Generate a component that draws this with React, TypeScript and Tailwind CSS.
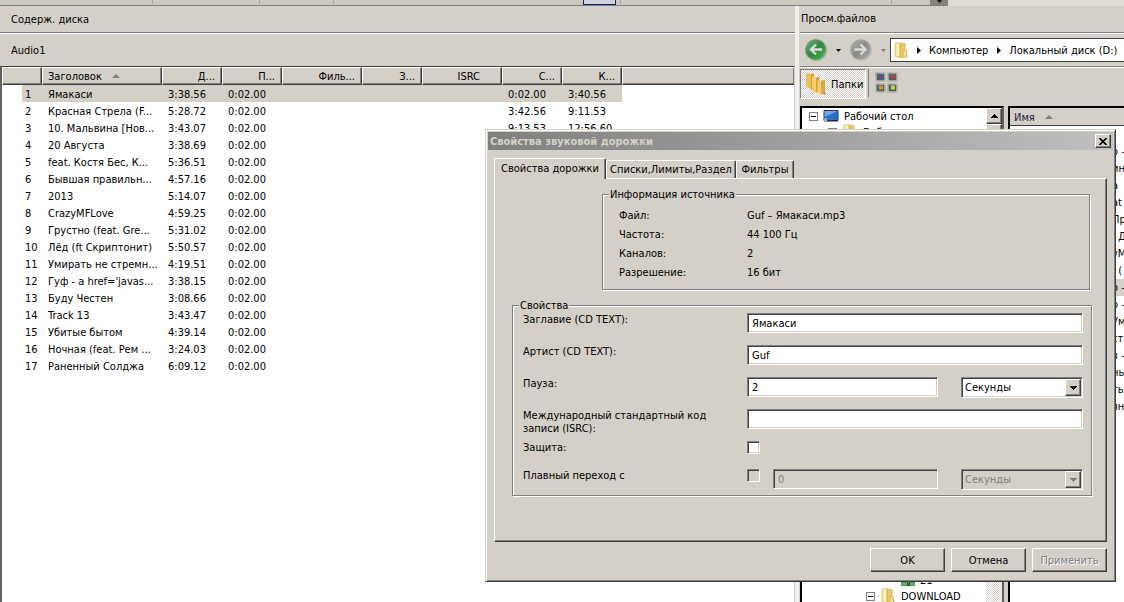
import { useState } from 'react'
import type { ReactNode } from 'react'

const raised =
  'border border-t-white border-l-white border-b-[#404040] border-r-[#404040] shadow-[inset_-1px_-1px_0_#808080]'
const sunken =
  'border border-t-[#808080] border-l-[#808080] border-b-white border-r-white shadow-[inset_1px_1px_0_#404040,inset_-1px_-1px_0_#d4d0c8]'
const dither = 'bg-[repeating-conic-gradient(#fff_0_25%,#d4d0c8_0_50%)] bg-[length:2px_2px]'

const tracks = [
  ['Ямакаси', '3:38.56', '0:02.00', '3:40.56'],
  ['Красная Стрела (F...', '5:28.72', '3:42.56', '9:11.53'],
  ['10. Мальвина [Нов...', '3:43.07', '9:13.53', '12:56.60'],
  ['20 Августа', '3:38.69'],
  ['feat. Костя Бес, К...', '5:36.51'],
  ['Бывшая правильн...', '4:57.16'],
  ['2013', '5:14.07'],
  ['CrazyMFLove', '4:59.25'],
  ['Грустно (feat. Gre...', '5:31.02'],
  ['Лёд (ft Скриптонит)', '5:50.57'],
  ['Умирать не стремн...', '4:19.51'],
  ["Гуф - a href='javas...", '3:38.15'],
  ['Буду Честен', '3:08.66'],
  ['Track 13', '3:43.47'],
  ['Убитые бытом', '4:39.14'],
  ['Ночная (feat. Рем ...', '3:24.03'],
  ['Раненный Солджа', '6:09.12'],
]

const columns = [
  { label: '', width: 'w-10', align: '' },
  { label: 'Заголовок', width: 'w-[120px]', align: 'pl-[5px]' },
  { label: 'Д...', width: 'w-[60px]', align: 'justify-end pr-[6px]' },
  { label: 'П...', width: 'w-[60px]', align: 'justify-end pr-[6px]' },
  { label: 'Филь...', width: 'w-20', align: 'justify-end pr-[6px]' },
  { label: 'З...', width: 'w-[60px]', align: 'justify-end pr-[6px]' },
  { label: 'ISRC', width: 'w-20', align: 'justify-end pr-[21px]' },
  { label: 'С...', width: 'w-[60px]', align: 'justify-end pr-[6px]' },
  { label: 'К...', width: 'w-[60px]', align: 'justify-end pr-[6px]' },
  { label: '', width: '', align: '' },
]

const files = ['', 'о –', 'ин', 'а', 'at', 'Пр', '\u00a0\u00a0Д', 'уМ', '\u00a0\u00a0(', 'о –', 'о –', 'Ум', 'ст', 'в –', 'нь', 'ть', 'чн']

function SortArrow() {
  return (
    <svg className="w-2 h-1 shrink-0" viewBox="0 0 8 4">
      <path d="M4 0 8 4H0z" fill="#808080" />
    </svg>
  )
}

function Caret({ className = 'text-black' }: { className?: string }) {
  return (
    <svg className={`w-[7px] h-1 shrink-0 ${className}`} viewBox="0 0 7 4" shapeRendering="crispEdges">
      <path d="M0 0h7L3.5 4z" fill="currentColor" />
    </svg>
  )
}

// small caret of the history drop-downs
function TinyCaret({ className = 'text-black' }: { className?: string }) {
  return (
    <svg className={`w-[5px] h-[3px] shrink-0 ${className}`} viewBox="0 0 5 3">
      <path d="M0 0h5L2.5 3z" fill="currentColor" />
    </svg>
  )
}

function Crumb() {
  return (
    <svg className="w-1 h-[7px] shrink-0" viewBox="0 0 4 7">
      <path d="M0 0 4 3.500 0 7z" fill="#000" />
    </svg>
  )
}

function NavArrow({ forward = false }: { forward?: boolean }) {
  const id = forward ? 'nav-forward' : 'nav-back'
  return (
    <svg className="w-6 h-6" viewBox="0 0 24 24">
      <defs>
        <linearGradient id={id} x1="0" y1="0" x2="1" y2="1">
          <stop offset="0" stopColor={forward ? '#b4b4b4' : '#7cb287'} />
          <stop offset=".5" stopColor={forward ? '#8b8b8b' : '#2f8a3c'} />
          <stop offset="1" stopColor={forward ? '#a9a9a9' : '#4cb04a'} />
        </linearGradient>
      </defs>
      <circle cx="12" cy="12" r="11" fill={forward ? '#bdbbb6' : '#9aa79a'} />
      <circle cx="11.5" cy="11.5" r="10" fill={`url(#${id})`} />
      <path
        d={forward ? 'M5.500 11.500h11M11.500 6.500l5 5-5 5' : 'M18 11.500H7M12 6.500l-5 5 5 5'}
        fill="none"
        stroke="#d9dcd9"
        strokeWidth="2.400"
      />
    </svg>
  )
}

function Folder() {
  return (
    <svg className="w-4 h-4 shrink-0" viewBox="0 0 16 16">
      <path d="M2 1 8 .5V14l-1 1.500-5-1z" fill="#f4e08b" stroke="#d9bb55" strokeWidth=".7" />
      <path d="M7.500 2 12 1.500V15l-5 .5z" fill="#eacb68" stroke="#caa545" strokeWidth=".7" />
      <path d="M3.500 1.500H6V14l-2.500-.5z" fill="#fbf2bd" />
      <path d="M10 8.500 13.500 8v7L10 15.500z" fill="#f5df8e" stroke="#cfae55" strokeWidth=".7" />
      <path d="M13 13h1.500v2H13z" fill="#7fb2c8" />
    </svg>
  )
}

function FoldersIcon() {
  return (
    <svg className="w-[22px] h-6 shrink-0" viewBox="0 0 22 24">
      <path d="M1 1 6 2v15l-5-2z" fill="#eebf55" />
      <path d="M6 2 9 1.500V17l-3 1z" fill="#d39c3c" />
      <path d="M7 4l4 1.500v15L7 18.500z" fill="#f3cd6a" />
      <path d="M11 5.500 14.500 5v14.500l-3.500 1z" fill="#d39c3c" />
      <path d="M12.500 8 16 9v13.500l-3.500-1.500z" fill="#f4cf70" />
      <path d="M16 8.500 20 8v13.500l-4 1z" fill="#dba848" />
      <path d="M18.500 20.500h2v2h-2z" fill="#6c93b8" />
    </svg>
  )
}

function ViewIcon() {
  const cells = [
    [0, 0, '#7a3fa0'],
    [12, 0, '#c43a3a'],
    [0, 11, '#e08a2a'],
    [12, 11, '#e2c424'],
  ] as const
  return (
    <svg className="w-6 h-6" viewBox="0 0 24 24">
      {cells.map(([x, y, color]) => (
        <g key={color} transform={`translate(${x} ${y})`}>
          <path d="M.5 1.500h10v9H.5z" fill="#e9e6df" stroke="#b1aea6" strokeWidth=".8" />
          <path d="M1.500 2.500h8v7h-8z" fill="#3f6a5c" />
          <path d="M1.500 2.500h3v2h-3z" fill="#58708c" />
          <path d="M4 3.500h4v4H4z" fill={color} />
        </g>
      ))}
    </svg>
  )
}

function Expander() {
  return (
    <svg className="w-[9px] h-[9px] shrink-0" viewBox="0 0 9 9" shapeRendering="crispEdges">
      <path d="M.5.5h8v8h-8z" fill="#fff" stroke="#808080" />
      <path d="M2 4.500h5" stroke="#000" />
    </svg>
  )
}

function DesktopIcon() {
  return (
    <svg className="w-4 h-4 shrink-0" viewBox="0 0 16 16">
      <path d="M1 2.500h14v10H1z" fill="#2f6fc6" stroke="#1a3a6b" />
      <path d="M1.500 3h13L1.500 9z" fill="#6fa8e6" />
      <path d="M1 12h14v1.500H1z" fill="#1d2c44" />
      <path d="M1 10h3v3H1z" fill="#57b7e8" />
      <path d="M2 12h2v1H2z" fill="#f3c332" />
    </svg>
  )
}

function ArchiveIcon() {
  return (
    <svg className="w-4 h-4 shrink-0" viewBox="0 0 16 16">
      <path d="M1 2h13v4H1z" fill="#a23a4a" />
      <path d="M1 6h14v4H1z" fill="#3b3a86" />
      <path d="M1 10h14v4H1z" fill="#3a9a4a" />
      <path d="M2 12h12" stroke="#7ee08a" />
      <path d="M7 2h3v12H7z" fill="#5b4a33" />
      <path d="M8 6h1v5H8z" fill="#c9bb92" />
    </svg>
  )
}

function TrackTable() {
  return (
    <table className="w-full table-fixed border-collapse">
      <thead>
        <tr>
          {columns.map((c, i) => (
            <th key={i} className={`h-[18px] p-0 font-normal ${c.width}`}>
              <div
                className={`h-[18px] flex items-center gap-[10px] bg-[#d4d0c8] ${raised} ${c.align} ${i === columns.length - 1 ? 'border-r-0' : ''}`}
              >
                {c.label}
                {i === 1 && <SortArrow />}
              </div>
            </th>
          ))}
        </tr>
      </thead>
      <tbody>
        {tracks.map(([title, length, start, end], i) => {
          const bg = i === 0 ? 'bg-[#d4d0c8]' : ''
          const cell = `p-0 pt-[2px] pl-[6px] ${bg}`
          return (
            <tr key={title} className="h-[17px] whitespace-nowrap">
              <td className="p-0 pl-5">
                <div className={`h-[17px] leading-[19px] pl-[3px] ${bg}`}>{i + 1}</div>
              </td>
              <td className={cell}>{title}</td>
              <td className={cell}>{length}</td>
              <td className={cell}>0:02.00</td>
              <td className={bg} />
              <td className={bg} />
              <td className={bg} />
              <td className={cell}>{start}</td>
              <td className={cell}>{end}</td>
              <td />
            </tr>
          )
        })}
      </tbody>
    </table>
  )
}

function DiscPane() {
  return (
    <section className="flex-1 min-w-0 flex flex-col">
      <h2 className="h-[27px] flex items-center px-[11px] pt-px border-b border-[#808080]">Содерж. диска</h2>
      <div className="h-[33px] flex items-center px-[11px] border-t border-t-white">Audio1</div>
      <div className="flex-1 min-h-0 overflow-hidden bg-white border-t border-l-2 border-r border-t-[#404040] border-l-[#606060] border-r-[#d4d0c8]">
        <TrackTable />
      </div>
    </section>
  )
}

function FilePane() {
  return (
    <section className="w-[324px] shrink-0 flex flex-col">
      <h2 className="h-[27px] flex items-center px-px pb-0.5 border-b border-[#808080]">Просм.файлов</h2>
      <div className="h-[34px] flex items-center border-t border-t-white border-b border-b-[#808080] pl-1">
        <button type="button" aria-label="Назад">
          <NavArrow />
        </button>
        <button type="button" aria-label="История" className="w-[21px] flex justify-center">
          <TinyCaret />
        </button>
        <button type="button" aria-label="Вперёд">
          <NavArrow forward />
        </button>
        <button type="button" aria-label="Недавние" className="w-[13px] flex justify-end">
          <TinyCaret className="text-[#808080]" />
        </button>
        <div className="ml-1 flex-1 min-w-0 h-6 flex items-center bg-white border border-r-0 border-[#404040] pl-[2px] whitespace-nowrap overflow-hidden">
          <Folder />
          <span className="w-[19px] flex justify-center pl-px"><Crumb /></span>
          <a href="#computer" className="px-[1px]">Компьютер</a>
          <span className="w-5 flex justify-center"><Crumb /></span>
          <a href="#d">Локальный диск (D:)</a>
        </div>
      </div>
      <div className="h-[39px] flex items-start border-t border-t-white pt-px">
        <button
          type="button"
          className={`h-[30px] w-[66px] flex items-center gap-1 pl-1 border border-t-[#808080] border-l-[#808080] border-b-white border-r-white ${dither}`}
        >
          <FoldersIcon />
          Папки
        </button>
        <span className="w-px h-7 ml-[2px] bg-[#808080]" />
        <button type="button" aria-label="Вид" className="mt-[2px] ml-[6px]">
          <ViewIcon />
        </button>
      </div>
      <div className="flex-1 min-h-0 flex">
        <div className="w-[204px] shrink-0 flex border-2 border-b-0 border-l-black border-t-black border-r-[#606060] bg-white overflow-hidden">
          <div className="flex-1 min-w-0 whitespace-nowrap">
            <div className="h-4 flex items-center gap-[5px] pl-[7px]">
              <Expander />
              <DesktopIcon />
              <span>Рабочий стол</span>
            </div>
            <div className="h-4 flex items-center gap-[5px] pl-[26px]">
              <Expander />
              <Folder />
              <span>Библиотеки</span>
            </div>
            <div className="h-[432px]" />
            <div className="h-4 flex items-center gap-1 pl-[98px]">
              <ArchiveIcon />
              <span>21</span>
            </div>
            <div className="h-4 flex items-center gap-[5px] pl-[64px]">
              <Expander />
              <Folder />
              <span>DOWNLOAD</span>
            </div>
          </div>
          <div className={`w-4 shrink-0 ${dither}`}>
            <button type="button" aria-label="Вверх" className={`w-4 h-4 flex items-center justify-center bg-[#d4d0c8] ${raised}`}>
              <Caret className="rotate-180" />
            </button>
            <div className={`h-20 bg-[#d4d0c8] ${raised}`} />
          </div>
        </div>
        <div className="ml-1 flex-1 min-w-0 border-2 border-r-0 border-b-0 border-black bg-white overflow-hidden">
          <div className="h-[18px] flex items-center gap-[10px] pl-1 pt-px bg-[#d4d0c8] border-b border-[#404040] text-[#202040]">
            Имя
            <SortArrow />
          </div>
          <ul>
            {files.map((name, i) => (
              <li key={i} className={`h-[17px] leading-[17px] pl-[102px] whitespace-nowrap ${i === 9 ? 'bg-[#d4d0c8]' : ''}`}>
                {name}
              </li>
            ))}
          </ul>
        </div>
      </div>
    </section>
  )
}

function Group({ title, className, children }: { title: string; className: string; children: ReactNode }) {
  return (
    <fieldset className={`border border-[#808080] shadow-[1px_1px_0_#fff,inset_1px_1px_0_#fff] ${className}`}>
      <legend className="ml-[6px] px-px leading-[13px] bg-[#d4d0c8]">{title}</legend>
      {children}
    </fieldset>
  )
}

function FormRow({ id, label, className = 'h-8', children }: { id: string; label: string; className?: string; children: ReactNode }) {
  return (
    <div className={`flex items-start ${className}`}>
      <label htmlFor={id} className="w-[224px] shrink-0 pr-8 leading-[13px]">
        {label}
      </label>
      {children}
    </div>
  )
}

function UnitSelect({ label, disabled = false }: { label: string; disabled?: boolean }) {
  return (
    <div className="relative w-[122px] ml-auto">
      <select
        aria-label={label}
        disabled={disabled}
        className={`block w-full h-[21px] appearance-none rounded-none px-[3px] opacity-100 ${sunken} ${disabled ? 'bg-[#d4d0c8] text-[#808080]' : 'bg-white'}`}
      >
        <option>Секунды</option>
      </select>
      <span
        className={`absolute right-0.5 top-0.5 w-4 h-[17px] flex items-center justify-center pointer-events-none bg-[#d4d0c8] ${raised}`}
      >
        <Caret className={disabled ? 'text-[#808080]' : 'text-black'} />
      </span>
    </div>
  )
}

const field = `h-5 min-w-0 px-1 rounded-none ${sunken}`
const tick = `w-[13px] h-[13px] shrink-0 appearance-none rounded-none ${sunken}`

const sourceInfo = [
  ['Файл:', 'Guf – Ямакаси.mp3'],
  ['Частота:', '44 100 Гц'],
  ['Каналов:', '2'],
  ['Разрешение:', '16 бит'],
]

function TrackDialog() {
  const [title, setTitle] = useState('Ямакаси')
  const [artist, setArtist] = useState('Guf')
  const [pause, setPause] = useState('2')
  const tab = 'bg-[#d4d0c8] border border-b-0 border-t-white border-l-white border-r-[#404040] shadow-[inset_-1px_0_0_#808080] rounded-t-[2px] whitespace-nowrap'
  const button = `w-[75px] h-6 bg-[#d4d0c8] ${raised}`

  return (
    <div
      role="dialog"
      aria-labelledby="dialog-title"
      className="absolute left-[485px] top-[129px] w-[631px] bg-[#d4d0c8] p-[2px] border border-t-[#d4d0c8] border-l-[#d4d0c8] border-r-[#404040] border-b-[#404040] shadow-[inset_1px_1px_0_#fff,inset_-1px_-1px_0_#808080]"
    >
      <div className="h-[18px] flex items-center justify-between pl-[2px] pr-[2px] bg-linear-to-r from-[#808080] to-[#c0c0c0]">
        <h1 id="dialog-title" className="font-bold text-[#d4d0c8]">Свойства звуковой дорожки</h1>
        <button type="button" aria-label="Закрыть" className={`w-4 h-[14px] flex items-center justify-center bg-[#d4d0c8] ${raised}`}>
          <svg className="w-2 h-[7px]" viewBox="0 0 8 7">
            <path d="M.5 0 7.500 7M7.500 0 .5 7" stroke="#000" strokeWidth="1.600" />
          </svg>
        </button>
      </div>
      <div className="px-[6px] pt-2 pb-[7px]">
        <div role="tablist" className="flex items-end">
          <button type="button" role="tab" aria-selected className={`${tab} relative z-10 -mb-px w-28 h-[21px] pb-0.5`}>
            Свойства дорожки
          </button>
          <button type="button" role="tab" aria-selected={false} className={`${tab} w-[130px] h-[18px]`}>
            Списки,Лимиты,Раздел
          </button>
          <button type="button" role="tab" aria-selected={false} className={`${tab} w-[58px] h-[18px]`}>
            Фильтры
          </button>
        </div>
        <div className={`h-[364px] pt-[9px] pl-[17px] pr-[14px] ${raised}`}>
          <Group title="Информация источника" className="ml-[90px] mr-[2px] h-[102px]">
            <dl className="pt-[5px] pl-4">
              {sourceInfo.map(([name, value]) => (
                <div key={name} className="flex h-[19px] items-center">
                  <dt className="w-32">{name}</dt>
                  <dd>{value}</dd>
                </div>
              ))}
            </dl>
          </Group>
          <Group title="Свойства" className="mt-[9px] h-[197px]">
            <div className="pt-px pl-[10px] pr-[8px]">
              <FormRow id="title" label="Заглавие (CD TEXT):">
                <input id="title" value={title} onChange={(e) => setTitle(e.target.value)} className={`${field} flex-1 bg-white`} />
              </FormRow>
              <FormRow id="artist" label="Артист (CD TEXT):">
                <input id="artist" value={artist} onChange={(e) => setArtist(e.target.value)} className={`${field} flex-1 bg-white`} />
              </FormRow>
              <FormRow id="pause" label="Пауза:">
                <input id="pause" value={pause} onChange={(e) => setPause(e.target.value)} className={`${field} w-[191px] bg-white`} />
                <UnitSelect label="Единицы паузы" />
              </FormRow>
              <FormRow id="isrc" label="Международный стандартный код записи (ISRC):">
                <input id="isrc" className={`${field} flex-1 bg-white`} />
              </FormRow>
              <FormRow id="protect" label="Защита:" className="h-7">
                <input id="protect" type="checkbox" className={`${tick} bg-white`} />
              </FormRow>
              <FormRow id="fade" label="Плавный переход с" className="h-6">
                <input id="fade" type="checkbox" disabled className={`${tick} bg-[#d4d0c8]`} />
                <input aria-label="Длина перехода" disabled value="0" className={`${field} ml-[13px] w-[165px] bg-[#d4d0c8] text-[#808080]`} />
                <UnitSelect label="Единицы перехода" disabled />
              </FormRow>
            </div>
          </Group>
        </div>
        <div className="flex justify-end gap-[6px] pt-[6px]">
          <button type="button" className={button}>OK</button>
          <button type="button" className={button}>Отмена</button>
          <button type="button" disabled className={`${button} text-[#808080] text-shadow-[1px_1px_0_#fff]`}>
            Применить
          </button>
        </div>
      </div>
    </div>
  )
}

function ToolbarEdge() {
  return (
    <div className="h-[6px] shrink-0 flex items-start bg-[#e0ddd6]">
      <div className="w-[948px] h-[6px] flex items-start bg-[#ccc9bf] border-b border-[#808080]">
        <span className="ml-[152px] w-px h-1 bg-[#a6a398]" />
        <span className="ml-[106px] w-px h-1 bg-[#a6a398]" />
        <span className="ml-[73px] w-px h-1 bg-[#a6a398]" />
        <span className="ml-[249px] w-[33px] h-[5px] bg-[#d0d1dc] border border-t-0 border-[#0a246a]" />
        <span className="ml-1 w-px h-1 bg-[#a6a398]" />
        <span className="ml-[270px] w-px h-1 bg-[#a6a398]" />
        <span className="ml-auto w-[18px] h-[5px] flex justify-center bg-[#85837d]">
          <TinyCaret />
        </span>
      </div>
    </div>
  )
}

export default function App() {
  return (
    <div className="relative h-screen overflow-hidden flex flex-col bg-[#d4d0c8] text-black text-[11px] leading-[13px] font-['DejaVu_Sans_Condensed','DejaVu_Sans',sans-serif]">
      <ToolbarEdge />
      <main className="flex-1 min-h-0 flex">
        <DiscPane />
        <div className="w-[5px] shrink-0 bg-[#f0efeb] border-r border-[#d4d0c8]" />
        <FilePane />
      </main>
      <TrackDialog />
    </div>
  )
}
